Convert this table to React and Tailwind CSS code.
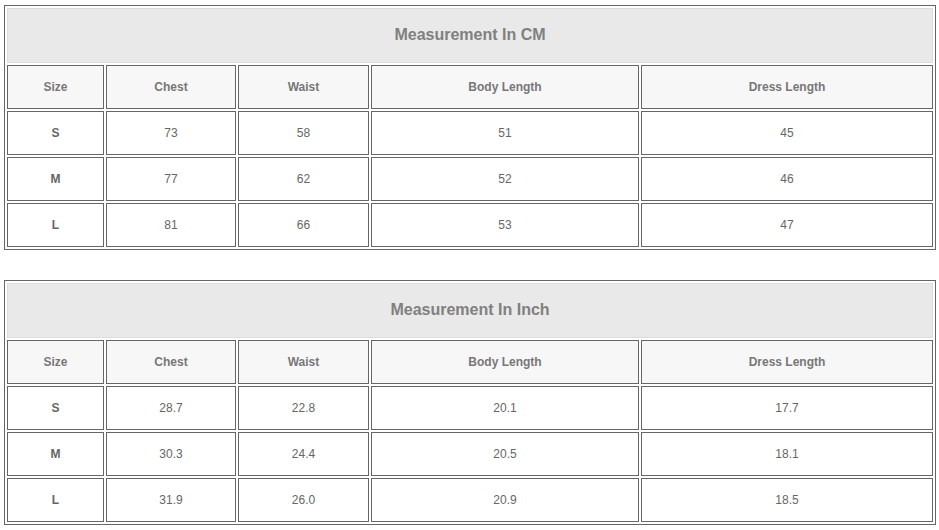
import React from "react";

const headers = ["Size", "Chest", "Waist", "Body Length", "Dress Length"];

const tables = [
  {
    title: "Measurement In CM",
    rows: [
      ["S", "73", "58", "51", "45"],
      ["M", "77", "62", "52", "46"],
      ["L", "81", "66", "53", "47"],
    ],
  },
  {
    title: "Measurement In Inch",
    rows: [
      ["S", "28.7", "22.8", "20.1", "17.7"],
      ["M", "30.3", "24.4", "20.5", "18.1"],
      ["L", "31.9", "26.0", "20.9", "18.5"],
    ],
  },
];

function SizeTable({ title, rows }) {
  return (
    <div className="w-[932px] border border-[#666] p-[2px] grid grid-cols-[97px_130px_131px_268px_292px] gap-[2px]">
      <div className="col-span-5 h-[55px] pb-[2px] border border-[#dcdcdc] bg-[#e9e9e9] flex items-center justify-center text-[16px] font-bold text-[#808080]">
        {title}
      </div>
      {headers.map((h) => (
        <div
          key={h}
          className="h-[44px] border border-[#666] bg-[#f7f7f7] flex items-center justify-center text-[12px] font-bold text-[#777]"
        >
          {h}
        </div>
      ))}
      {rows.map((r, i) =>
        r.map((c, j) => (
          <div
            key={i + "-" + j}
            className={
              "h-[44px] border border-[#666] bg-white flex items-center justify-center text-[12px] text-[#666] " +
              (j === 0 ? "font-bold" : "font-normal")
            }
          >
            {c}
          </div>
        ))
      )}
    </div>
  );
}

export default function App() {
  return (
    <div
      className="w-[939px] h-[530px] bg-white pl-[4px] pt-[5px] flex flex-col gap-[30px]"
      style={{ fontFamily: '"Liberation Sans", Arial, sans-serif' }}
    >
      {tables.map((t) => (
        <SizeTable key={t.title} {...t} />
      ))}
    </div>
  );
}
